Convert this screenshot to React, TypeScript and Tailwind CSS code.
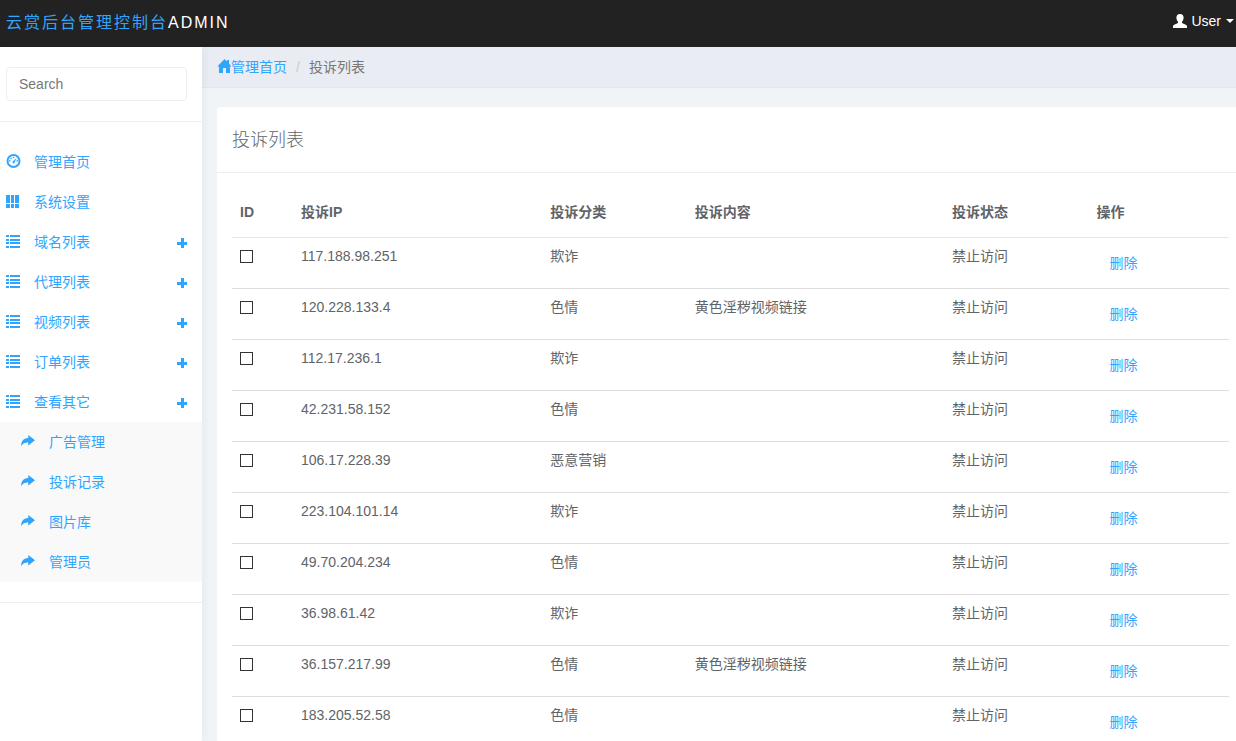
import React, { useState } from "react";

interface Complaint {
  ip: string;
  category: string;
  content?: string;
}

interface MenuItem {
  label: string;
  icon: React.ReactNode;
  expandable?: boolean;
}

const complaints: Complaint[] = [
  { ip: "117.188.98.251", category: "欺诈" },
  { ip: "120.228.133.4", category: "色情", content: "黄色淫秽视频链接" },
  { ip: "112.17.236.1", category: "欺诈" },
  { ip: "42.231.58.152", category: "色情" },
  { ip: "106.17.228.39", category: "恶意营销" },
  { ip: "223.104.101.14", category: "欺诈" },
  { ip: "49.70.204.234", category: "色情" },
  { ip: "36.98.61.42", category: "欺诈" },
  { ip: "36.157.217.99", category: "色情", content: "黄色淫秽视频链接" },
  { ip: "183.205.52.58", category: "色情" },
];

const DashboardIcon = () => (
  <svg width="15" height="16" viewBox="0 0 15 16" fill="currentColor" aria-hidden="true">
    <circle cx="7.5" cy="7" r="6" fill="none" stroke="currentColor" strokeWidth="2" />
    <path d="M6.500 7.800 10.600 3.800 8.500 8.700a1.050 1.050 0 1 1-2-.9z" />
    <circle cx="3.800" cy="6.900" r=".8" />
    <circle cx="5" cy="4.500" r=".8" />
    <circle cx="7.500" cy="3.500" r=".8" />
    <circle cx="11.200" cy="6.900" r=".8" />
  </svg>
);

const GridIcon = () => (
  <svg width="15" height="14" viewBox="0 0 15 14" fill="currentColor" shapeRendering="crispEdges" aria-hidden="true">
    <path d="M0 0h4v8H0zM5 0h3v8H5zM9 0h4v8H9zM0 9h4v4H0zM5 9h3v4H5zM9 9h4v4H9z" />
  </svg>
);

const ListIcon = () => (
  <svg width="15" height="14" viewBox="0 0 15 14" fill="currentColor" shapeRendering="crispEdges" aria-hidden="true">
    <path d="M0 0h3v2H0zM4 0h10v2H4zM0 4h3v2H0zM4 4h10v2H4zM0 7h3v2H0zM4 7h10v2H4zM0 11h3v2H0zM4 11h10v2H4z" />
  </svg>
);

const ShareIcon = () => (
  <svg width="14" height="14" viewBox="0 0 14 14" fill="currentColor" aria-hidden="true">
    <path d="M7.300 0 14 5.200 7.300 10.400V7.500C4 7.400 1.800 8.400.3 11.200-.2 6.500 2.500 3 7.300 2.900z" />
  </svg>
);

const PlusIcon = () => (
  <svg width="10" height="10" viewBox="0 0 10 10" fill="currentColor" shapeRendering="crispEdges" aria-hidden="true">
    <path d="M4 0h3v4h3v3H7v3H4V7H0V4h4z" />
  </svg>
);

const HomeIcon = () => (
  <svg width="14" height="16" viewBox="0 0 14 16" fill="currentColor" aria-hidden="true">
    <path d="M7.500 0 10 2.500V1h2v3.500L14.500 7.500H13V14H9V9H6v5H2V7.500H.3z" />
  </svg>
);

const UserIcon = () => (
  <svg width="14" height="14" viewBox="0 0 14 14" fill="currentColor" aria-hidden="true">
    <path d="M7 0c2.400 0 3.600 1.500 3.600 3.600 0 1.900-.7 3.300-1.600 4.200v1.300c1.600.9 5 1.600 5 3.500V14H0v-1.400c0-1.900 3.400-2.600 5-3.500V7.800C4.100 6.900 3.400 5.500 3.400 3.600 3.400 1.500 4.600 0 7 0z" />
  </svg>
);

const menuItems: MenuItem[] = [
  { label: "管理首页", icon: <DashboardIcon /> },
  { label: "系统设置", icon: <GridIcon /> },
  { label: "域名列表", icon: <ListIcon />, expandable: true },
  { label: "代理列表", icon: <ListIcon />, expandable: true },
  { label: "视频列表", icon: <ListIcon />, expandable: true },
  { label: "订单列表", icon: <ListIcon />, expandable: true },
  { label: "查看其它", icon: <ListIcon />, expandable: true },
];

const subItems = ["广告管理", "投诉记录", "图片库", "管理员"];

function Navbar() {
  return (
    <header className="flex h-[47px] shrink-0 items-center justify-between bg-[#222] pr-[2px] pl-[6px] pb-[2px] text-white">
      <a href="#" className="text-base leading-5 tracking-[2px]">
        <span className="text-[#30a5ff]">云赏后台管理控制台</span>ADMIN
      </a>
      <button type="button" className="mb-1 flex items-center text-sm leading-5">
        <UserIcon />
        <span className="ml-1">User</span>
        <svg className="ml-[5px]" width="8" height="4" viewBox="0 0 8 4" fill="currentColor" aria-hidden="true">
          <path d="M0 0h8L4 4z" />
        </svg>
      </button>
    </header>
  );
}

function Sidebar() {
  const [open, setOpen] = useState("查看其它");

  return (
    <aside className="z-10 w-[202px] shrink-0 bg-white pt-5 shadow-[1px_0_10px_rgba(0,0,0,0.05)]">
      <form role="search" className="border-b border-[#eee] pr-[15px] pb-5 pl-[6px]">
        <input
          type="text"
          placeholder="Search"
          aria-label="Search"
          className="block h-[34px] w-full rounded border border-[#eee] px-3 text-sm placeholder:text-[#777]"
        />
      </form>
      <nav className="border-b border-[#eee] py-5 text-sm text-[#30a5ff]">
        <ul>
          {menuItems.map((item) => (
            <li key={item.label}>
              <div className="flex h-10 items-center pr-[15px] pl-[6px]">
                <a href="#" className="flex flex-1 items-center gap-[13px]">
                  {item.icon}
                  <span>{item.label}</span>
                </a>
                {item.expandable && (
                  <button
                    type="button"
                    aria-label={item.label}
                    aria-expanded={open === item.label}
                    className="pt-[2px]"
                    onClick={() => setOpen(open === item.label ? "" : item.label)}
                  >
                    <PlusIcon />
                  </button>
                )}
              </div>
              {open === item.label && (
                <ul className="bg-[#f9f9f9]">
                  {subItems.map((label) => (
                    <li key={label}>
                      <a href="#" className="flex h-10 items-center gap-[14px] pl-[21px]">
                        <ShareIcon />
                        <span>{label}</span>
                      </a>
                    </li>
                  ))}
                </ul>
              )}
            </li>
          ))}
        </ul>
      </nav>
    </aside>
  );
}

function ComplaintTable() {
  return (
    <table className="w-full table-fixed text-left text-sm leading-5">
      <colgroup>
        <col className="w-[61px]" />
        <col className="w-[25%]" />
        <col className="w-[14.5%]" />
        <col className="w-[25.8%]" />
        <col className="w-[14.5%]" />
        <col />
      </colgroup>
      <thead>
        <tr className="h-[49px] border-b border-[#e6e7e8]">
          <th className="px-2">ID</th>
          <th className="px-2">投诉IP</th>
          <th className="px-2">投诉分类</th>
          <th className="px-2">投诉内容</th>
          <th className="px-2">投诉状态</th>
          <th className="px-2">操作</th>
        </tr>
      </thead>
      <tbody>
        {complaints.map((item) => (
          <tr key={item.ip} className="border-b border-[#ddd] align-top">
            <td className="p-2">
              <input
                type="checkbox"
                aria-label={item.ip}
                className="mt-1 block size-[13px] appearance-none border border-[#333] bg-white checked:bg-[#30a5ff]"
              />
            </td>
            <td className="p-2">{item.ip}</td>
            <td className="p-2">{item.category}</td>
            <td className="p-2">{item.content}</td>
            <td className="p-2">禁止访问</td>
            <td className="p-2">
              <a href="#" className="inline-block border border-transparent px-3 py-1.5 align-top text-[#30a5ff]">
                删除
              </a>
            </td>
          </tr>
        ))}
      </tbody>
    </table>
  );
}

export default function App() {
  return (
    <div className="flex h-screen flex-col overflow-hidden bg-[#f1f4f7] font-['Liberation_Sans','Noto_Sans_CJK_SC',sans-serif] text-[#5f6468]">
      <Navbar />
      <div className="flex min-h-0 flex-1">
        <Sidebar />
        <main className="min-w-0 flex-1">
          <nav className="border-b border-[#e3e6eb] bg-[#e9ecf2] px-[15px] py-2.5 text-sm leading-5">
            <ol className="flex items-center">
              <li>
                <a href="#" className="flex items-center text-[#30a5ff]">
                  <HomeIcon />
                  管理首页
                </a>
              </li>
              <li className="px-[9px] text-[#ccc]">/</li>
              <li className="text-[#777]">投诉列表</li>
            </ol>
          </nav>
          <section className="mt-[19px] ml-[15px] rounded-tl bg-white">
            <h1 className="border-b border-[#eee] px-[15px] pt-5 pb-[18px] text-lg leading-[27px] font-light">投诉列表</h1>
            <div className="py-[15px] pr-[7px] pl-[15px]">
              <ComplaintTable />
            </div>
          </section>
        </main>
      </div>
    </div>
  );
}
